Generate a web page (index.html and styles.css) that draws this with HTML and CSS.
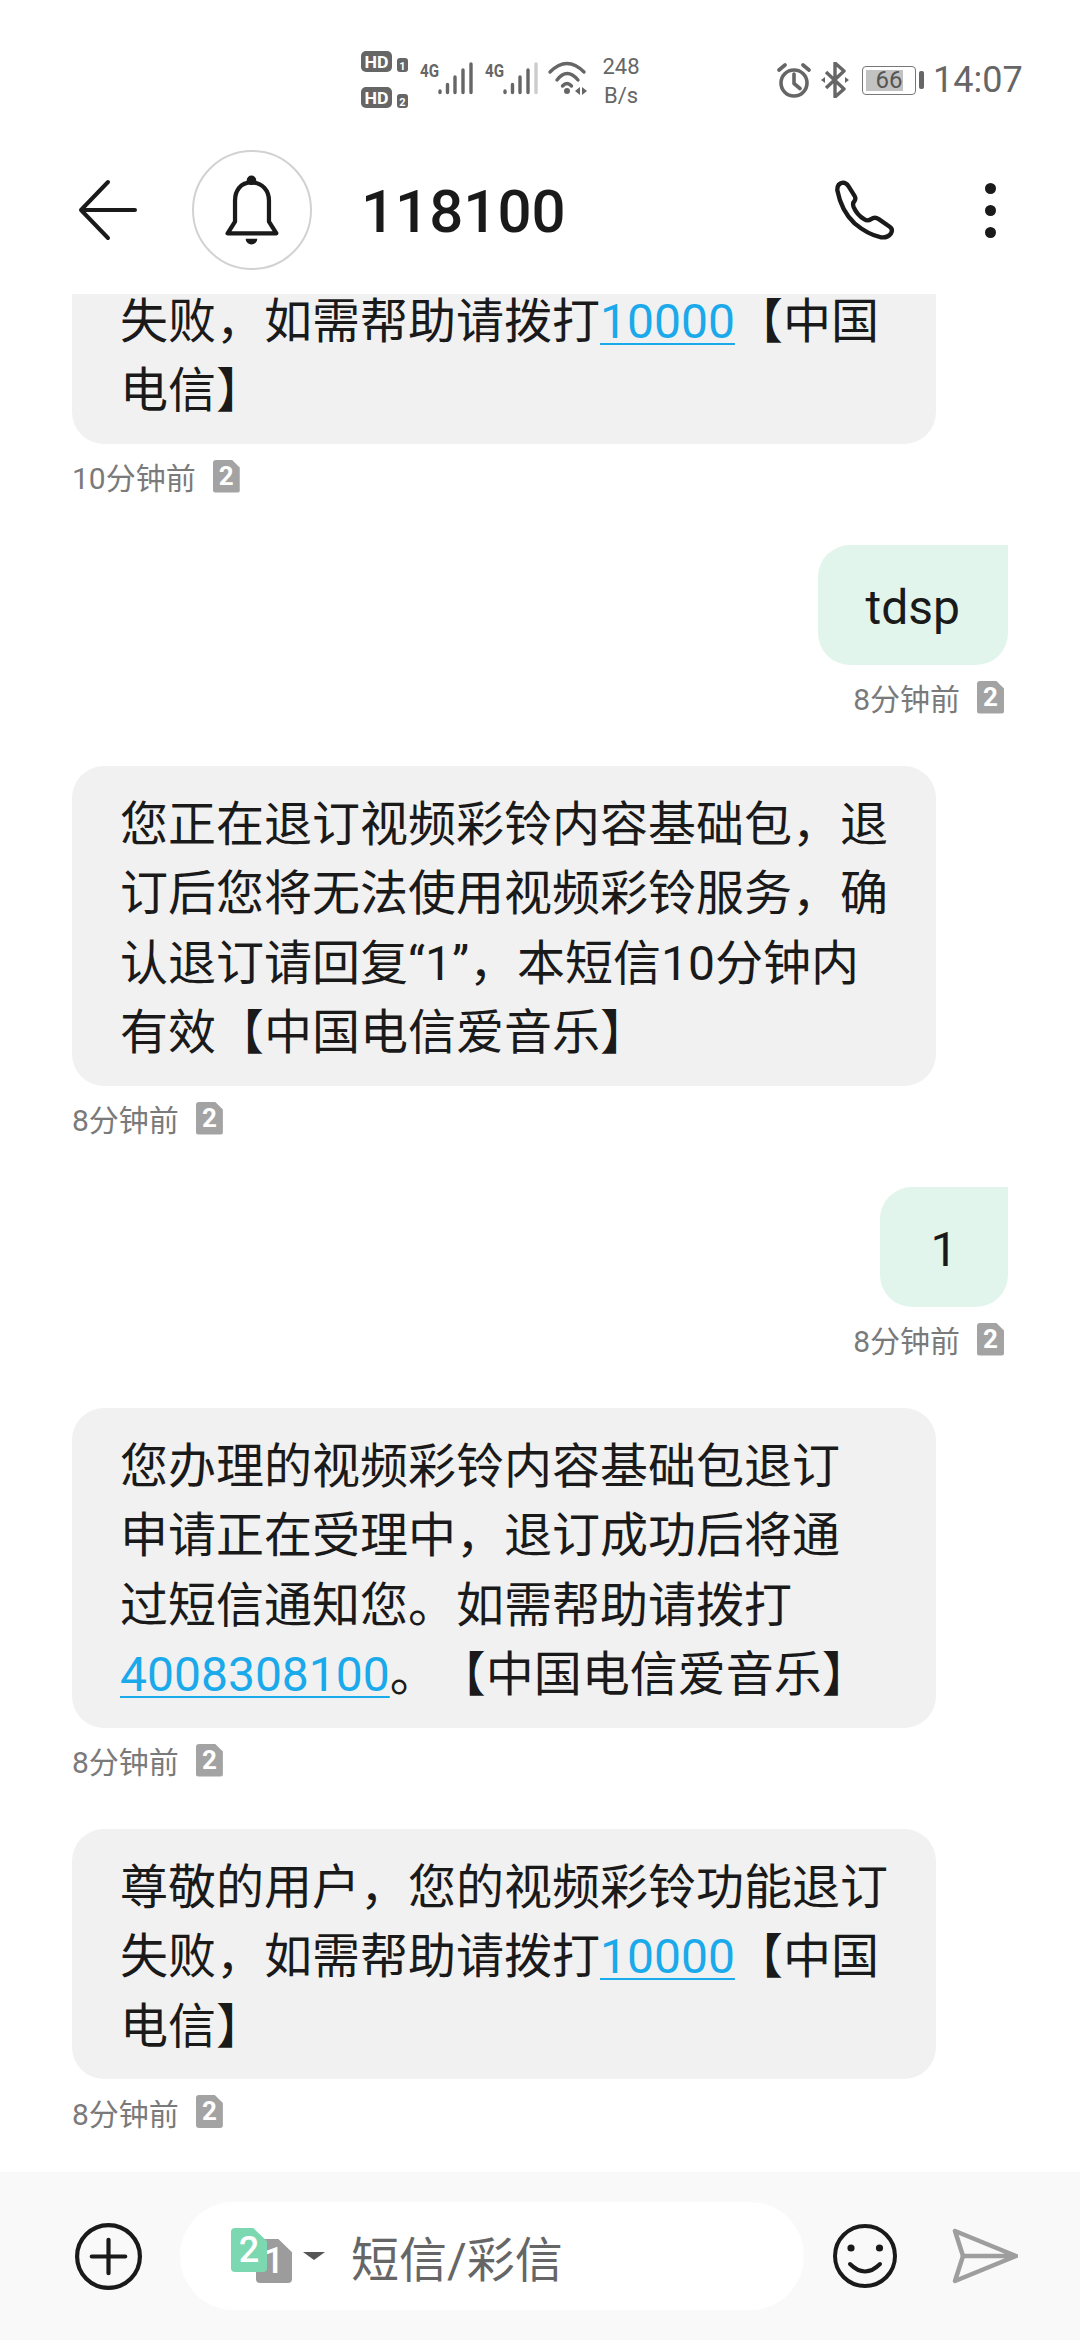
FILE: index.html
```html
<!DOCTYPE html>
<html lang="zh-CN">
<head>
<meta charset="utf-8">
<title>118100</title>
<link rel="stylesheet" href="styles.css">
</head>
<body>
<div class="screen">
  <div class="status">
    <svg class="net" viewBox="361 50 226 60" width="226" height="60">
      <rect x="361" y="51" width="31" height="21" rx="5" class="fill"/>
      <text x="376.5" y="67.5" class="hd" text-anchor="middle" textLength="24" lengthAdjust="spacingAndGlyphs">HD</text>
      <rect x="397" y="58" width="11" height="14" rx="3" class="fill"/>
      <text x="402.5" y="69.5" class="tiny" text-anchor="middle">1</text>
      <rect x="361" y="87" width="31" height="21" rx="5" class="fill"/>
      <text x="376.5" y="103.5" class="hd" text-anchor="middle" textLength="24" lengthAdjust="spacingAndGlyphs">HD</text>
      <rect x="397" y="94" width="11" height="14" rx="3" class="fill"/>
      <text x="402.5" y="105.5" class="tiny" text-anchor="middle">2</text>
      <text x="420" y="77" class="g4" textLength="19" lengthAdjust="spacingAndGlyphs">4G</text>
      <text x="485" y="77" class="g4" textLength="19" lengthAdjust="spacingAndGlyphs">4G</text>
      <g class="bars">
        <path d="M440 91v1.500M447.500 84.500v8M455 77v15.500M463 70v22.500M471 64v28.500"/>
        <path d="M505 91v1.500M512.500 84.500v8M520 77v15.500M528 70v22.500"/>
        <path class="off" d="M536 64v28.500"/>
      </g>
      <g class="wifi">
        <path d="M550 72Q567 55 584 72M557 80Q567 67 578 80M562.500 86Q567 81 571.500 86"/>
      </g>
      <circle cx="567" cy="91" r="3" class="fill"/>
      <path class="fill" d="M575 91l5-4v8zM587 91l-5-4v8z"/>
    </svg>
    <div class="speed">248<br>B/s</div>
    <svg class="alarm" viewBox="0 0 34 35" width="34" height="35">
      <circle cx="17" cy="20" r="13" class="line"/>
      <path class="line" d="M17 11v9.500l6 5M2 7l6-5M32 7l-6-5"/>
    </svg>
    <svg class="bt" viewBox="0 0 28 36" width="28" height="36">
      <path class="thin" d="M5 10l18 17-9 8V1l9 8L5 26"/>
      <path class="fill" d="M0 18l4-3v6zM28 18l-4-3v6z"/>
    </svg>
    <div class="battery">
      <div class="cell"><div class="level"></div><span class="pct">66</span></div>
      <div class="nub"></div>
    </div>
    <div class="clock">14:07</div>
  </div>

  <header class="top">
    <svg class="back" viewBox="0 0 60 62" width="60" height="62">
      <path class="ink" d="M30 3L3 31l27 28M3 31h54"/>
    </svg>
    <div class="avatar">
      <svg viewBox="0 0 60 66" width="64" height="70">
        <path class="ink" d="M29.500 7C19 7 14 15 14 24v20L7 55h46L46 44V24C46 15 40 7 29.500 7z"/>
        <circle cx="29.500" cy="5" r="4.500" class="solid"/>
        <path class="solid" d="M24 60h11a5.500 5.500 0 0 1-11 0z"/>
      </svg>
    </div>
    <div class="title">118100</div>
    <svg class="phone" viewBox="100 145 190 185" width="63" height="62">
      <path class="ink wide" d="M113 178Q112 158 130 155Q140 155 147 166L165 195Q170 203 165 210Q158 217 162 228Q172 252 195 266Q205 272 215 265Q226 257 238 265L270 287Q282 295 275 308Q265 322 245 320Q205 312 165 278Q125 240 113 178Z"/>
    </svg>
    <div class="more"><i></i><i></i><i></i></div>
  </header>

  <main class="list">
    <div class="msg">
      <div class="bubble">失败，如需帮助请拨打<a class="link">10000</a>【中国<br>电信】</div>
      <div class="meta"><span>10分钟前</span><span class="sim">2</span></div>
    </div>
    <div class="msg out">
      <div class="bubble">tdsp</div>
      <div class="meta"><span>8分钟前</span><span class="sim">2</span></div>
    </div>
    <div class="msg">
      <div class="bubble">您正在退订视频彩铃内容基础包，退<br>订后您将无法使用视频彩铃服务，确<br>认退订请回复“1”，本短信10分钟内<br>有效【中国电信爱音乐】</div>
      <div class="meta"><span>8分钟前</span><span class="sim">2</span></div>
    </div>
    <div class="msg out">
      <div class="bubble">1</div>
      <div class="meta"><span>8分钟前</span><span class="sim">2</span></div>
    </div>
    <div class="msg">
      <div class="bubble">您办理的视频彩铃内容基础包退订<br>申请正在受理中，退订成功后将通<br>过短信通知您。如需帮助请拨打<br><a class="link">4008308100</a>。【中国电信爱音乐】</div>
      <div class="meta"><span>8分钟前</span><span class="sim">2</span></div>
    </div>
    <div class="msg">
      <div class="bubble">尊敬的用户，您的视频彩铃功能退订<br>失败，如需帮助请拨打<a class="link">10000</a>【中国<br>电信】</div>
      <div class="meta"><span>8分钟前</span><span class="sim">2</span></div>
    </div>
  </main>

  <footer class="bar">
    <svg class="plus" viewBox="0 0 64 64" width="67" height="67">
      <circle cx="32" cy="32" r="30" class="ink"/>
      <path class="ink" d="M16 32h32M32 16v32"/>
    </svg>
    <div class="pill">
      <div class="picker">
        <span class="card one">1</span>
        <span class="card two">2</span>
      </div>
      <span class="caret"></span>
      <span class="hint">短信/彩信</span>
    </div>
    <svg class="smile" viewBox="0 0 66 66" width="66" height="66">
      <circle cx="33" cy="33" r="30" class="ink"/>
      <circle cx="19" cy="25" r="3.600" class="solid"/>
      <circle cx="47.500" cy="25" r="3.600" class="solid"/>
      <path class="ink" d="M18 41Q33 56 48 41"/>
    </svg>
    <svg class="send" viewBox="0 0 66 56" width="66" height="56">
      <path class="mute" d="M3 3l61 25-61 25 8-25zM11 28h53"/>
    </svg>
  </footer>
</div>
</body>
</html>
```
FILE: styles.css
```css
* { box-sizing: border-box; }
html, body { margin: 0; padding: 0; }
body {
  width: 1080px;
  height: 2340px;
  overflow: hidden;
  background: #fff;
  font-family: Roboto, "Noto Sans CJK SC", sans-serif;
  color: #1a1a1a;
  text-spacing-trim: space-all;
}
.screen { display: flex; flex-direction: column; width: 1080px; height: 2340px; }

/* status bar */
.status {
  height: 126px;
  flex: none;
  padding: 34px 60px 0 361px;
  display: flex;
  align-items: center;
  color: #666;
}
.net { flex: none; display: block; }
.fill { fill: #666; }
.hd { font: 700 17px Roboto, sans-serif; fill: #fff; }
.tiny { font: 700 11px Roboto, sans-serif; fill: #fff; }
.g4 { font: 700 18px Roboto, sans-serif; fill: #666; }
.bars path { stroke: #666; stroke-width: 3.400; stroke-linecap: round; fill: none; }
.bars .off { stroke: #ccc; }
.wifi path { stroke: #666; stroke-width: 3.400; stroke-linecap: round; fill: none; }
.speed {
  width: 42px;
  margin-left: 13px;
  padding-top: 1px;
  font-size: 22px;
  line-height: 29px;
  text-align: center;
  flex: none;
}
.alarm { margin-left: 135px; flex: none; }
.line { fill: none; stroke: #666; stroke-width: 3.600; stroke-linecap: round; stroke-linejoin: round; }
.bt { margin-left: 10px; flex: none; }
.thin { fill: none; stroke: #666; stroke-width: 3.400; stroke-linejoin: round; }
.battery { margin-left: 13px; display: flex; align-items: center; flex: none; }
.cell {
  position: relative;
  width: 54px;
  height: 29px;
  border: 1.500px solid #777;
  border-radius: 4px;
  padding: 3px;
}
.level { width: 37px; height: 100%; background: #c2c2c2; }
.pct {
  position: absolute;
  inset: 0;
  font-size: 24px;
  line-height: 27px;
  text-align: center;
  color: #555;
}
.nub { width: 5px; height: 18px; margin-left: 3px; background: #666; border-radius: 2px; }
.clock { margin-left: 9px; font-size: 36px; line-height: 40px; flex: none; }

/* header */
.top {
  height: 168px;
  flex: none;
  display: flex;
  align-items: center;
  padding-left: 78px;
}
.back { flex: none; }
.ink { fill: none; stroke: #1a1a1a; stroke-width: 4; stroke-linecap: round; stroke-linejoin: round; }
.wide { stroke-width: 13; }
.solid { fill: #1a1a1a; }
.avatar {
  width: 120px;
  height: 120px;
  margin-left: 54px;
  border: 2.500px solid #d2d2d2;
  border-radius: 50%;
  display: flex;
  align-items: center;
  justify-content: center;
  flex: none;
}
.title { margin-left: 49px; padding-top: 2px; font-size: 60px; font-weight: 500; flex: 1; }
.phone { flex: none; }
.more {
  width: 12px;
  margin: 0 83px 0 89px;
  display: flex;
  flex-direction: column;
  gap: 11px;
  flex: none;
}
.more i { width: 11px; height: 11px; background: #1a1a1a; border-radius: 50%; display: block; }

/* messages */
.list {
  flex: 1;
  min-height: 0;
  overflow: hidden;
  display: flex;
  flex-direction: column;
  justify-content: flex-end;
  gap: 52px;
  padding: 0 72px 44px;
}
.msg { flex: none; display: flex; flex-direction: column; align-items: flex-start; gap: 16px; }
.bubble {
  width: 864px;
  padding: 24px 48px 18px;
  font-size: 48px;
  line-height: 69.500px;
  white-space: nowrap;
  background: #f1f1f1;
  border-radius: 32px;
}
.out { align-items: flex-end; }
.out .bubble {
  width: auto;
  min-width: 128px;
  min-height: 120px;
  padding: 28px 48px 22px;
  text-align: center;
  background: #e2f5ec;
  border-top-right-radius: 0;
}
.link { color: #1aa9ea; text-decoration: underline; text-decoration-thickness: 2px; text-underline-offset: 5px; }
.meta {
  display: flex;
  align-items: center;
  gap: 17px;
  height: 33px;
  font-size: 30px;
  color: #7a7a7a;
}
.out .meta { padding-right: 4px; }
.sim {
  width: 27px;
  height: 33px;
  background: #a3a3a3;
  border-radius: 3px;
  clip-path: polygon(0 0, 70% 0, 100% 24%, 100% 100%, 0 100%);
  color: #fff;
  font-size: 26px;
  font-weight: 700;
  line-height: 33px;
  text-align: center;
}

/* composer */
.bar {
  height: 168px;
  flex: none;
  display: flex;
  align-items: center;
  padding-left: 75px;
  background: #f9f9f9;
}
.plus, .smile, .send { flex: none; }
.pill {
  width: 624px;
  height: 108px;
  margin-left: 38px;
  padding-left: 51px;
  display: flex;
  align-items: center;
  background: #fff;
  border-radius: 54px;
}
.picker { position: relative; width: 61px; height: 56px; flex: none; }
.card {
  position: absolute;
  width: 36px;
  height: 44px;
  border-radius: 4px;
  clip-path: polygon(0 0, 62% 0, 100% 30%, 100% 100%, 0 100%);
  color: #fff;
  font-size: 36px;
  font-weight: 500;
  line-height: 44px;
  text-align: center;
}
.one { left: 25px; top: 11px; background: #9c9c9c; }
.two { left: 0; top: 0; background: #7bd8b0; }
.caret {
  width: 0;
  height: 0;
  margin-left: 11px;
  border: 11px solid transparent;
  border-top: 8px solid #555;
  border-bottom: 0;
  flex: none;
}
.hint { margin-left: 26px; font-size: 48px; color: #666; }
.smile { margin-left: 28px; }
.send { margin-left: 54px; }
.mute { fill: none; stroke: #9e9e9e; stroke-width: 4.500; stroke-linecap: round; stroke-linejoin: round; }
```
